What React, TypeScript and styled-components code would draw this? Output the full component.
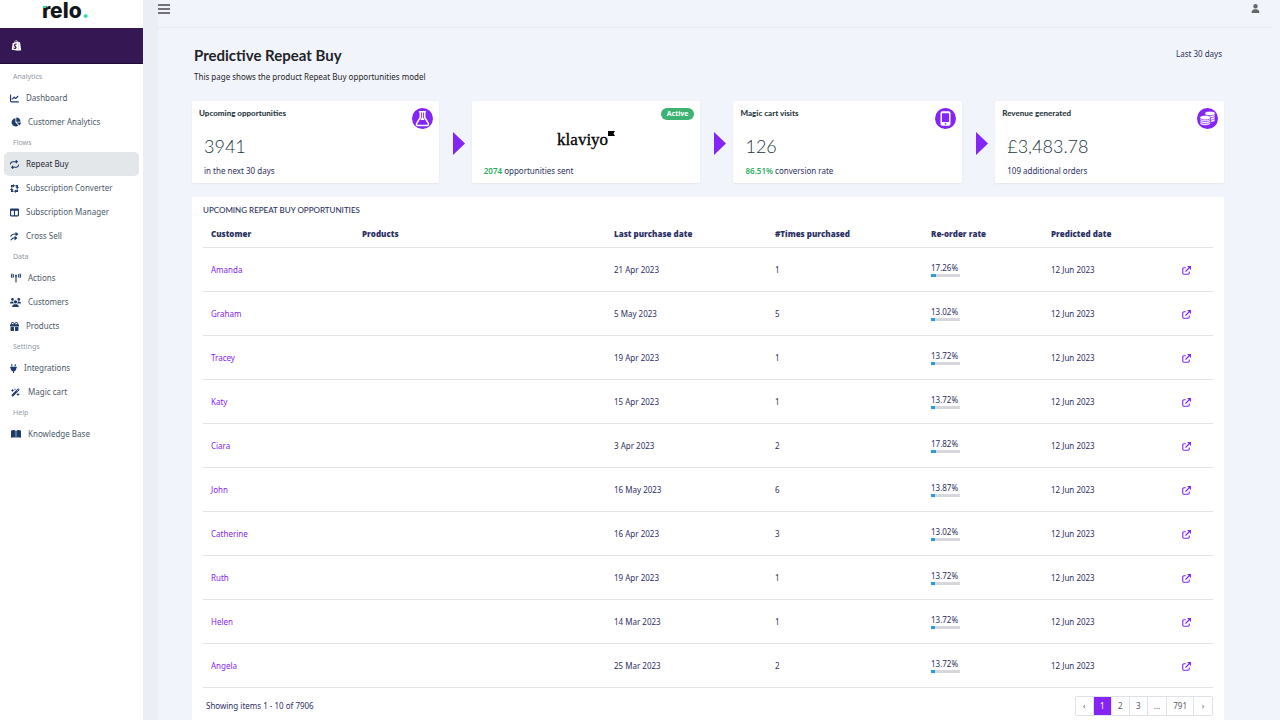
import React from "react";
import styled, { createGlobalStyle } from "styled-components";
import {
  FaBookOpen,
  FaChartLine,
  FaChartPie,
  FaGift,
  FaPlug,
  FaRepeat,
  FaShopify,
  FaTableColumns,
  FaTowerBroadcast,
  FaUsers,
  FaUser,
  FaWandMagicSparkles,
} from "react-icons/fa6";

const bodyFont = `"Noto Sans", "Open Sans", sans-serif`;
const headingFont = `Lato, "Noto Sans", sans-serif`;

const color = {
  purple: "#8424f5",
  brand: "#351754",
  navy: "#2c3163",
  page: "#f1f4fa",
  line: "#e3e5e9",
  green: "#27ae60",
};

const GlobalStyle = createGlobalStyle`
  * { box-sizing: border-box; }
  body { margin: 0; background: ${color.page}; color: ${color.navy}; font: 8px/12px ${bodyFont}; }
  button { font: inherit; color: inherit; background: none; border: 0; padding: 0; cursor: pointer; }
  a { color: inherit; text-decoration: none; }
  h1, h2, p, ul { margin: 0; padding: 0; }
  li { list-style: none; }
  svg { display: block; flex: none; }
`;

const Shell = styled.div`
  display: flex;
  min-height: 100vh;
`;

const Sidebar = styled.aside`
  flex: 0 0 143px;
  background: #fff;
`;

const LogoBar = styled.div`
  display: flex;
  justify-content: center;
  align-items: flex-start;
  height: 28px;
  padding-right: 12px;
`;

const Logo = styled.a`
  position: relative;
  font: 800 21px/22px Inter, sans-serif;
  color: #15181a;
`;

const LogoDot = styled.span`
  color: #36d6a8;
`;

const LogoAccent = styled.span`
  position: absolute;
  left: 1px;
  top: 6px;
  width: 3px;
  height: 2px;
  background: #36d6a8;
`;

const StoreBar = styled.div`
  display: flex;
  align-items: center;
  height: 36px;
  padding-left: 11px;
  background: ${color.brand};
  border-bottom: 1px solid #1f0b38;
  color: #fff;
`;

const Nav = styled.nav`
  padding: 4px 4px 0;
`;

const NavLabel = styled.h2`
  padding-left: 9px;
  font: 400 7px/18px ${bodyFont};
  color: #8f99a5;
`;

const NavLink = styled.a<{ $active?: boolean }>`
  display: flex;
  align-items: center;
  gap: 7px;
  height: 24px;
  padding-left: 6px;
  border-radius: 5px;
  color: ${(p) => (p.$active ? "#1f2a33" : "#4b5a68")};
  background: ${(p) => (p.$active ? "#e3e7ea" : "transparent")};
`;

const NavIcon = styled.span<{ $width: number }>`
  display: flex;
  justify-content: center;
  width: ${(p) => p.$width}px;
  color: #1c3a6b;
`;

const Main = styled.div`
  flex: 1;
  min-width: 0;
  display: flex;
  flex-direction: column;
  padding-right: 8px;
  border-left: 15px solid #ebeff5;
`;

const TopBar = styled.header`
  display: flex;
  justify-content: space-between;
  align-items: flex-start;
  height: 28px;
  padding: 4px 12px 0 0;
  border-bottom: 1px solid #e6eaee;
  color: #666;
`;

const Content = styled.main`
  flex: 1;
  display: flex;
  flex-direction: column;
  padding: 17px 48px 0 34px;
`;

const PageHead = styled.div`
  display: flex;
  justify-content: space-between;
  align-items: flex-start;
  height: 56px;
  padding: 0 2px;
`;

const Title = styled.h1`
  font: 700 15px/20px ${headingFont};
  color: #1f2428;
`;

const Subtitle = styled.p`
  margin-top: 6px;
  color: #1f2428;
`;

const Range = styled.button`
  margin-top: 3px;
`;

const Cards = styled.section`
  display: grid;
  grid-template-columns: 247fr 33px 229fr 33px 229fr 33px 229fr;
`;

const Card = styled.article`
  position: relative;
  display: flex;
  flex-direction: column;
  height: 82px;
  padding: 6px 12px;
  background: #fff;
  border-radius: 2px;
  box-shadow: 0 1px 2px #e2e6ee;
`;

const CardTitle = styled.h2`
  margin-left: -5px;
  font: 900 8px/12px ${headingFont};
  color: #2b3b45;
`;

const CardValue = styled.p`
  margin-top: 15px;
  font: 300 18px/24px ${headingFont};
  color: #24363f;
`;

const CardNote = styled.p`
  margin-top: auto;
`;

const Strong = styled.strong`
  font-weight: 600;
  color: ${color.green};
`;

const CardBadge = styled.span`
  position: absolute;
  top: 7px;
  right: 6px;
`;

const Status = styled.span`
  display: block;
  padding: 0 6px;
  border-radius: 6px;
  background: #3cb371;
  color: #fff;
  font: 700 7px/12px ${bodyFont};
`;

const Partner = styled.p`
  display: flex;
  justify-content: center;
  align-items: flex-start;
  margin-top: 24px;
  font: 400 17px/18px "Liberation Serif", serif;
  color: #000;
  -webkit-text-stroke: 0.3px #000;
`;

const Step = styled.div`
  display: flex;
  align-items: center;
  padding: 2px 0 0 14px;
`;

const Panel = styled.section`
  flex: 1;
  margin-top: 14px;
  padding: 7px 11px 4px;
  background: #fff;
  border-radius: 2px;
`;

const PanelTitle = styled.h2`
  font: 500 8px/13px ${headingFont};
  color: ${color.navy};
`;

const Table = styled.table`
  width: 100%;
  table-layout: fixed;
  border-collapse: collapse;
`;

const Col = styled.col<{ $width?: number }>`
  width: ${(p) => (p.$width ? `${p.$width}px` : "auto")};
`;

const Th = styled.th`
  height: 30px;
  padding: 5px 8px 0;
  text-align: left;
  font-family: "Open Sans", "Noto Sans", sans-serif;
  font-weight: 800;
  border-bottom: 1px solid ${color.line};
`;

const Td = styled.td`
  height: 44px;
  padding: 2px 8px 0;
  vertical-align: middle;
  border-bottom: 1px solid ${color.line};
`;

const PurpleLink = styled.a`
  color: ${color.purple};
`;

const Rate = styled.div`
  line-height: 10px;
`;

const Track = styled.div`
  width: 29px;
  height: 3px;
  margin-top: 1px;
  background: #d6d8db;
`;

const Fill = styled.div`
  height: 3px;
  background: #2d9cdb;
`;

const Footer = styled.footer`
  display: flex;
  justify-content: space-between;
  align-items: center;
  padding: 8px 0 0 3px;
`;

const Pager = styled.ul`
  display: flex;
  border: 1px solid #dee2e6;
  border-radius: 2px;
`;

const PageButton = styled.button<{ $active?: boolean }>`
  display: block;
  min-width: 18px;
  height: 18px;
  padding: 0 6px;
  border-right: 1px solid #dee2e6;
  color: ${(p) => (p.$active ? "#fff" : "#555c66")};
  background: ${(p) => (p.$active ? color.purple : "#fff")};
  li:last-child & { border-right: 0; }
`;

const ConvertIcon = () => (
  <svg width="9" height="9" viewBox="0 0 18 18" fill="none" stroke="currentColor" strokeWidth="3">
    <path d="M7 3.500H3.500V7M11 3.500h3.500V7M14.500 11v3.500H11M7 14.500H3.500V11" />
    <path d="M6 0l4 3.500L6 7zM18 6l-3.500 4L11 6zM12 18l-4-3.500L12 11zM0 12l3.500-4L7 12z" fill="currentColor" stroke="none" />
  </svg>
);

const CrossSellIcon = () => (
  <svg width="9" height="9" viewBox="0 0 18 18" fill="none" stroke="currentColor" strokeWidth="2.4">
    <path d="M1 9c2-4 4-5 8-5h5M1 16c3 0 3-4 6-4h6" />
    <path d="M11 0l6 4-6 5zM9 8l6 4-6 5z" fill="currentColor" stroke="none" />
  </svg>
);

const MenuIcon = () => (
  <svg width="12" height="10" viewBox="0 0 12 10" stroke="#4b4453" strokeWidth="1.4">
    <path d="M0 1h12M0 5h12M0 9h12" />
  </svg>
);

const ArrowIcon = () => (
  <svg width="12" height="23" viewBox="0 0 12 23" fill={color.purple}>
    <path d="M0 0l12 11.5L0 23z" />
  </svg>
);

const FlaskIcon = () => (
  <svg width="21" height="21" viewBox="0 0 21 21">
    <circle cx="10.5" cy="10.5" r="10.5" fill={color.purple} />
    <path
      d="M7.500 3.800h6M8.300 4v5.500L4.700 15.400c-.6 1.200 0 2 1 2h9.600c1 0 1.600-.8 1-2L12.700 9.500V4"
      fill="none"
      stroke="#fff"
      strokeWidth="1.500"
      strokeLinecap="round"
    />
    <path d="M9.900 4h1.200v5.500l1.600 2.500H8.300l1.600-2.500z" fill="#fff" />
  </svg>
);

const PhoneIcon = () => (
  <svg width="21" height="21" viewBox="0 0 21 21">
    <circle cx="10.5" cy="10.5" r="10.5" fill={color.purple} />
    <rect x="5.500" y="3.200" width="10" height="14.600" rx="1.800" fill="#fff" />
    <path d="M7 5.200h7v8.800H7zM9.700 15.300h1.600v1.200H9.700z" fill={color.purple} />
  </svg>
);

const CoinsIcon = () => (
  <svg width="21" height="21" viewBox="0 0 21 21">
    <circle cx="10.5" cy="10.5" r="10.5" fill={color.purple} />
    <g fill="#fff" stroke={color.purple} strokeWidth=".7">
      <path d="M8 12.4c0 2.5 10 2.5 10 0V5.5H8z" />
      <path d="M8 10.2c0 2.5 10 2.5 10 0M8 7.8c0 2.5 10 2.5 10 0" fill="none" />
      <ellipse cx="13" cy="5.4" rx="5.2" ry="2.2" />
      <path d="M3 15.5c0 2.6 10.6 2.6 10.6 0V9.8H3z" />
      <path d="M3 13.6c0 2.6 10.6 2.6 10.6 0M3 11.6c0 2.6 10.6 2.6 10.6 0" fill="none" />
      <ellipse cx="8.3" cy="9.6" rx="5.5" ry="2.3" />
    </g>
  </svg>
);

const OpenIcon = () => (
  <svg width="9" height="9" viewBox="0 0 18 18" fill="none" stroke="currentColor" strokeWidth="2.2">
    <path d="M7.5 3.5H4A2.500 2.500 0 0 0 1.500 6v8A2.500 2.500 0 0 0 4 16.500h8a2.500 2.500 0 0 0 2.500-2.500v-3M7 11l7-7" />
    <path d="M10 0h8v8z" fill="currentColor" stroke="none" />
  </svg>
);

const FlagIcon = () => (
  <svg width="7" height="5" viewBox="0 0 14 10">
    <path d="M0 0h14l-3 5 3 5H0z" />
  </svg>
);

type NavEntry = { label: string; icon: React.ReactNode; width: number; active?: boolean };

const groups: { label: string; items: NavEntry[] }[] = [
  {
    label: "Analytics",
    items: [
      { label: "Dashboard", icon: <FaChartLine size={9} />, width: 9 },
      { label: "Customer Analytics", icon: <FaChartPie size={10} />, width: 11 },
    ],
  },
  {
    label: "Flows",
    items: [
      { label: "Repeat Buy", icon: <FaRepeat size={9} />, width: 9, active: true },
      { label: "Subscription Converter", icon: <ConvertIcon />, width: 9 },
      { label: "Subscription Manager", icon: <FaTableColumns size={9} />, width: 9 },
      { label: "Cross Sell", icon: <CrossSellIcon />, width: 9 },
    ],
  },
  {
    label: "Data",
    items: [
      { label: "Actions", icon: <FaTowerBroadcast size={10} />, width: 11 },
      { label: "Customers", icon: <FaUsers size={11} />, width: 11 },
      { label: "Products", icon: <FaGift size={9} />, width: 9 },
    ],
  },
  {
    label: "Settings",
    items: [
      { label: "Integrations", icon: <FaPlug size={9} />, width: 7 },
      { label: "Magic cart", icon: <FaWandMagicSparkles size={9} />, width: 11 },
    ],
  },
  { label: "Help", items: [{ label: "Knowledge Base", icon: <FaBookOpen size={10} />, width: 11 }] },
];

const rows = [
  ["Amanda", "21 Apr 2023", "1", 17.26],
  ["Graham", "5 May 2023", "5", 13.02],
  ["Tracey", "19 Apr 2023", "1", 13.72],
  ["Katy", "15 Apr 2023", "1", 13.72],
  ["Ciara", "3 Apr 2023", "2", 17.82],
  ["John", "16 May 2023", "6", 13.87],
  ["Catherine", "16 Apr 2023", "3", 13.02],
  ["Ruth", "19 Apr 2023", "1", 13.72],
  ["Helen", "14 Mar 2023", "1", 13.72],
  ["Angela", "25 Mar 2023", "2", 13.72],
] as [string, string, string, number][];

const pages = ["‹", "1", "2", "3", "...", "791", "›"];

const NextStep = () => (
  <Step>
    <ArrowIcon />
  </Step>
);

export default function App() {
  return (
    <Shell>
      <GlobalStyle />
      <Sidebar>
        <LogoBar>
          <Logo href="#">
            relo<LogoDot>.</LogoDot>
            <LogoAccent />
          </Logo>
        </LogoBar>
        <StoreBar>
          <FaShopify size={11} />
        </StoreBar>
        <Nav>
          {groups.map((group) => (
            <section key={group.label}>
              <NavLabel>{group.label}</NavLabel>
              <ul>
                {group.items.map((item) => (
                  <li key={item.label}>
                    <NavLink href="#" $active={item.active}>
                      <NavIcon $width={item.width}>{item.icon}</NavIcon>
                      {item.label}
                    </NavLink>
                  </li>
                ))}
              </ul>
            </section>
          ))}
        </Nav>
      </Sidebar>
      <Main>
        <TopBar>
          <button aria-label="Toggle menu">
            <MenuIcon />
          </button>
          <button aria-label="Account">
            <FaUser size={9} />
          </button>
        </TopBar>
        <Content>
          <PageHead>
            <div>
              <Title>Predictive Repeat Buy</Title>
              <Subtitle>This page shows the product Repeat Buy opportunities model</Subtitle>
            </div>
            <Range>Last 30 days</Range>
          </PageHead>
          <Cards>
            <Card>
              <CardTitle>Upcoming opportunities</CardTitle>
              <CardBadge>
                <FlaskIcon />
              </CardBadge>
              <CardValue>3941</CardValue>
              <CardNote>in the next 30 days</CardNote>
            </Card>
            <NextStep />
            <Card>
              <CardBadge>
                <Status>Active</Status>
              </CardBadge>
              <Partner>
                klaviyo
                <FlagIcon />
              </Partner>
              <CardNote>
                <Strong>2074</Strong> opportunities sent
              </CardNote>
            </Card>
            <NextStep />
            <Card>
              <CardTitle>Magic cart visits</CardTitle>
              <CardBadge>
                <PhoneIcon />
              </CardBadge>
              <CardValue>126</CardValue>
              <CardNote>
                <Strong>86.51%</Strong> conversion rate
              </CardNote>
            </Card>
            <NextStep />
            <Card>
              <CardTitle>Revenue generated</CardTitle>
              <CardBadge>
                <CoinsIcon />
              </CardBadge>
              <CardValue>£3,483.78</CardValue>
              <CardNote>109 additional orders</CardNote>
            </Card>
          </Cards>
          <Panel>
            <PanelTitle>UPCOMING REPEAT BUY OPPORTUNITIES</PanelTitle>
            <Table>
              <colgroup>
                <Col $width={151} />
                <Col />
                <Col $width={161} />
                <Col $width={156} />
                <Col $width={120} />
                <Col $width={131} />
                <Col $width={39} />
              </colgroup>
              <thead>
                <tr>
                  <Th scope="col">Customer</Th>
                  <Th scope="col">Products</Th>
                  <Th scope="col">Last purchase date</Th>
                  <Th scope="col">#Times purchased</Th>
                  <Th scope="col">Re-order rate</Th>
                  <Th scope="col">Predicted date</Th>
                  <Th scope="col" aria-label="Open" />
                </tr>
              </thead>
              <tbody>
                {rows.map(([name, date, times, rate]) => (
                  <tr key={name}>
                    <Td>
                      <PurpleLink href="#">{name}</PurpleLink>
                    </Td>
                    <Td />
                    <Td>{date}</Td>
                    <Td>{times}</Td>
                    <Td>
                      <Rate>{rate.toFixed(2)}%</Rate>
                      <Track>
                        <Fill style={{ width: `${rate}%` }} />
                      </Track>
                    </Td>
                    <Td>12 Jun 2023</Td>
                    <Td>
                      <PurpleLink href="#" aria-label={`Open ${name}`}>
                        <OpenIcon />
                      </PurpleLink>
                    </Td>
                  </tr>
                ))}
              </tbody>
            </Table>
            <Footer>
              <p>Showing items 1 - 10 of 7906</p>
              <Pager>
                {pages.map((page) => (
                  <li key={page}>
                    <PageButton $active={page === "1"}>{page}</PageButton>
                  </li>
                ))}
              </Pager>
            </Footer>
          </Panel>
        </Content>
      </Main>
    </Shell>
  );
}
